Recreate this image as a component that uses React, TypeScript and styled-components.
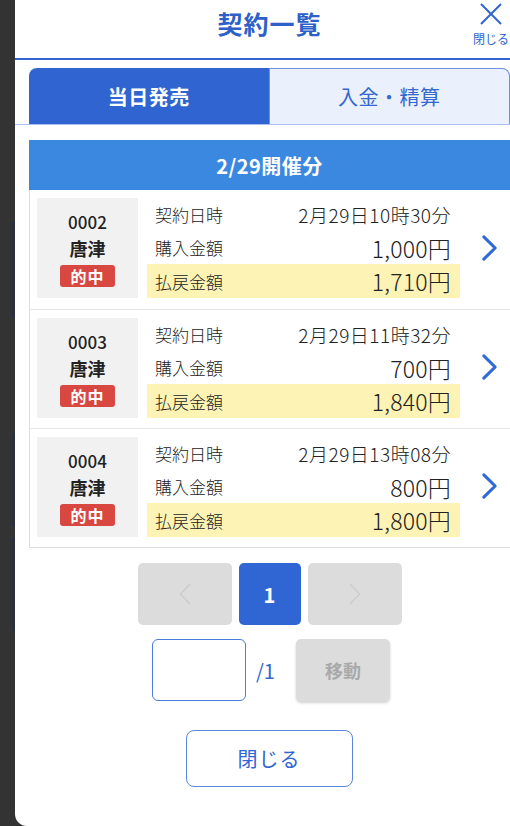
import React from 'react';
import styled, { createGlobalStyle } from 'styled-components';

const GlobalStyle = createGlobalStyle`
  html, body {
    margin: 0;
    padding: 0;
    background: #333333;
    overflow: hidden;
  }
  body {
    font-family: 'Noto Sans CJK JP', 'Noto Sans', sans-serif;
  }
  * {
    box-sizing: border-box;
  }
`;

const blue = '#3065d2';

const Page = styled.div`
  display: flex;
  width: 510px;
  height: 826px;
  overflow: hidden;
`;

const Backdrop = styled.div`
  width: 15px;
  flex-shrink: 0;
  display: flex;
  flex-direction: column;
  padding-top: 222px;
`;

interface BackdropCardProps {
  gap?: number;
  size: number;
}

const BackdropCard = styled.div<BackdropCardProps>`
  margin-left: 11px;
  height: ${({ size }) => size}px;
  margin-bottom: ${({ gap }) => gap || 0}px;
  border-radius: 4px 0 0 4px;
  border: 1px solid #26314a;
  border-right: 0;
  background: #2d3038;
`;

const Modal = styled.div`
  width: 509px;
  flex-shrink: 0;
  height: 826px;
  background: #fff;
  border-bottom-left-radius: 12px;
  display: flex;
  flex-direction: column;
`;

const Header = styled.div`
  position: relative;
  height: 60px;
  border-bottom: 2px solid ${blue};
  padding: 6px 14px 0;
`;

const Title = styled.h1`
  margin: 0;
  width: 481px;
  text-align: center;
  font-size: 25px;
  line-height: 34px;
  font-weight: 700;
  color: #2d60c9;
  letter-spacing: 1px;
`;

const CloseIcon = styled.button`
  position: absolute;
  top: 2px;
  left: 455px;
  width: 42px;
  border: 0;
  background: none;
  padding: 0;
  display: flex;
  flex-direction: column;
  align-items: center;
  color: ${blue};
  font-family: inherit;
  font-size: 12px;
  line-height: 14px;
  cursor: pointer;
`;

const CloseCaption = styled.span`
  margin-top: 6px;
`;

const TabArea = styled.div`
  padding: 8px 0 0 14px;
  border-bottom: 1px solid #a8c0ee;
`;

const Tabs = styled.div`
  display: flex;
  width: 481px;
  height: 56px;
`;

interface TabProps {
  active?: boolean;
}

const Tab = styled.div<TabProps>`
  flex: 1;
  display: flex;
  align-items: center;
  justify-content: center;
  font-size: 20px;
  letter-spacing: 0.5px;
  border-radius: ${({ active }) => (active ? '8px 0 0 0' : '0 8px 0 0')};
  ${({ active }) =>
    active
      ? `
    background: #3064d0;
    color: #fff;
    font-weight: 700;
  `
      : `
    background: #eaf1fc;
    color: #3568cf;
    border: 1px solid #6d93de;
    border-bottom: 0;
  `}
`;

const Content = styled.div`
  padding: 15px 0 0 14px;
  display: flex;
  flex-direction: column;
  align-items: flex-start;
`;

const DayHeader = styled.div`
  width: 481px;
  height: 50px;
  background: #3b88e1;
  color: #fff;
  font-size: 20px;
  font-weight: 700;
  display: flex;
  align-items: center;
  justify-content: center;
  letter-spacing: 0.5px;
`;

const List = styled.div`
  width: 481px;
  border-left: 1px solid #dddddd;
  border-bottom: 1px solid #dddddd;
`;

const Row = styled.div`
  display: flex;
  height: 119px;
  padding: 8px 0 0 7px;
  border-top: 1px solid #e6e6e6;
  &:first-child {
    border-top: 0;
  }
`;

const RaceBox = styled.div`
  width: 101px;
  height: 100px;
  background: #f1f1f1;
  display: flex;
  flex-direction: column;
  align-items: center;
  padding-top: 11px;
  color: #222;
`;

const RaceNo = styled.div`
  font-size: 17px;
  font-weight: 500;
  line-height: 26px;
`;

const Venue = styled.div`
  font-size: 18px;
  font-weight: 700;
  line-height: 26px;
  margin-bottom: 4px;
`;

const HitBadge = styled.div`
  width: 55px;
  height: 22px;
  border-radius: 3px;
  background: #d84740;
  color: #fff;
  font-size: 16px;
  font-weight: 700;
  display: flex;
  align-items: center;
  justify-content: center;
  letter-spacing: 1px;
`;

const Detail = styled.div`
  width: 313px;
  margin-left: 9px;
  display: flex;
  flex-direction: column;
`;

interface LineProps {
  highlight?: boolean;
}

const Line = styled.div<LineProps>`
  height: ${({ highlight }) => (highlight ? 34 : 33)}px;
  display: flex;
  align-items: center;
  justify-content: space-between;
  padding: 0 9px 0 8px;
  color: #222;
  background: ${({ highlight }) => (highlight ? '#fdf3b4' : 'transparent')};
`;

const Label = styled.span`
  font-size: 17px;
  font-weight: 300;
`;

interface ValueProps {
  big?: boolean;
}

const Value = styled.span<ValueProps>`
  font-size: ${({ big }) => (big ? 23 : 19)}px;
  font-weight: 300;
  letter-spacing: ${({ big }) => (big ? 0.2 : 0.5)}px;
`;

const ChevronCell = styled.div`
  flex: 1;
  display: flex;
  align-items: center;
  justify-content: center;
  padding: 0 0 12px 8px;
`;

const Pager = styled.div`
  width: 481px;
  display: flex;
  justify-content: center;
  gap: 7px;
  margin-top: 15px;
`;

interface PageButtonProps {
  current?: boolean;
  wide?: boolean;
}

const PageButton = styled.div<PageButtonProps>`
  width: ${({ wide }) => (wide ? 94 : 62)}px;
  height: 62px;
  border-radius: 5px;
  display: flex;
  align-items: center;
  justify-content: center;
  background: ${({ current }) => (current ? '#3066d3' : '#dcdcdc')};
  color: ${({ current }) => (current ? '#fff' : '#cfcfcf')};
  font-size: 20px;
  font-weight: 700;
`;

const JumpRow = styled.div`
  width: 481px;
  display: flex;
  align-items: center;
  justify-content: center;
  margin-top: 14px;
  padding-left: 3px;
`;

const PageInput = styled.input`
  width: 94px;
  height: 62px;
  border: 1px solid #4a7ddc;
  border-radius: 6px;
  outline: none;
  font-size: 18px;
  text-align: center;
`;

const PageTotal = styled.span`
  color: ${blue};
  font-size: 20px;
  margin: 0 21px 0 10px;
`;

const MoveButton = styled.div`
  width: 94px;
  height: 62px;
  border-radius: 5px;
  background: #dcdcdc;
  color: #a9a9a9;
  font-size: 18px;
  font-weight: 700;
  display: flex;
  align-items: center;
  justify-content: center;
  box-shadow: 0 2px 3px rgba(0, 0, 0, 0.18);
`;

const Footer = styled.div`
  width: 481px;
  display: flex;
  justify-content: center;
  margin-top: 29px;
`;

const CloseButton = styled.button`
  width: 167px;
  height: 57px;
  border: 1px solid #5a86dc;
  border-radius: 8px;
  background: #fff;
  color: ${blue};
  font-family: inherit;
  font-size: 20px;
  letter-spacing: 1px;
  margin-right: 1px;
`;

const contracts = [
  { no: '0002', date: '2月29日10時30分', bought: '1,000円', payout: '1,710円' },
  { no: '0003', date: '2月29日11時32分', bought: '700円', payout: '1,840円' },
  { no: '0004', date: '2月29日13時08分', bought: '800円', payout: '1,800円' },
];

interface ChevronProps {
  color: string;
  dir?: 'left' | 'right';
  stroke?: number;
  w?: number;
  h?: number;
}

const Chevron = ({ color, dir = 'right', stroke = 2, w = 14, h = 24 }: ChevronProps) => (
  <svg width={w} height={h} viewBox="0 0 12 20" fill="none" preserveAspectRatio="none">
    <path
      d={dir === 'right' ? 'M2 2 L10 10 L2 18' : 'M10 2 L2 10 L10 18'}
      stroke={color}
      strokeWidth={stroke}
      strokeLinecap="round"
      strokeLinejoin="round"
    />
  </svg>
);

export default function App() {
  return (
    <>
      <GlobalStyle />
      <Page>
        <Backdrop>
          <BackdropCard size={95} gap={116} />
          <BackdropCard size={93} gap={12} />
          <BackdropCard size={93} />
        </Backdrop>
        <Modal>
          <Header>
            <Title>契約一覧</Title>
            <CloseIcon>
              <svg width="24" height="24" viewBox="0 0 24 24" fill="none">
                <path d="M2 2 L22 22 M22 2 L2 22" stroke={blue} strokeWidth="2" />
              </svg>
              <CloseCaption>閉じる</CloseCaption>
            </CloseIcon>
          </Header>
          <TabArea>
            <Tabs>
              <Tab active>当日発売</Tab>
              <Tab>入金・精算</Tab>
            </Tabs>
          </TabArea>
          <Content>
            <DayHeader>2/29開催分</DayHeader>
            <List>
              {contracts.map((c) => (
                <Row key={c.no}>
                  <RaceBox>
                    <RaceNo>{c.no}</RaceNo>
                    <Venue>唐津</Venue>
                    <HitBadge>的中</HitBadge>
                  </RaceBox>
                  <Detail>
                    <Line>
                      <Label>契約日時</Label>
                      <Value>{c.date}</Value>
                    </Line>
                    <Line>
                      <Label>購入金額</Label>
                      <Value big>{c.bought}</Value>
                    </Line>
                    <Line highlight>
                      <Label>払戻金額</Label>
                      <Value big>{c.payout}</Value>
                    </Line>
                  </Detail>
                  <ChevronCell>
                    <Chevron color="#2f6bd6" stroke={2.2} w={17} h={28} />
                  </ChevronCell>
                </Row>
              ))}
            </List>
            <Pager>
              <PageButton wide>
                <Chevron color="#cdcdcd" dir="left" stroke={1.3} />
              </PageButton>
              <PageButton current>1</PageButton>
              <PageButton wide>
                <Chevron color="#cdcdcd" stroke={1.3} />
              </PageButton>
            </Pager>
            <JumpRow>
              <PageInput />
              <PageTotal>/1</PageTotal>
              <MoveButton>移動</MoveButton>
            </JumpRow>
            <Footer>
              <CloseButton>閉じる</CloseButton>
            </Footer>
          </Content>
        </Modal>
      </Page>
    </>
  );
}
